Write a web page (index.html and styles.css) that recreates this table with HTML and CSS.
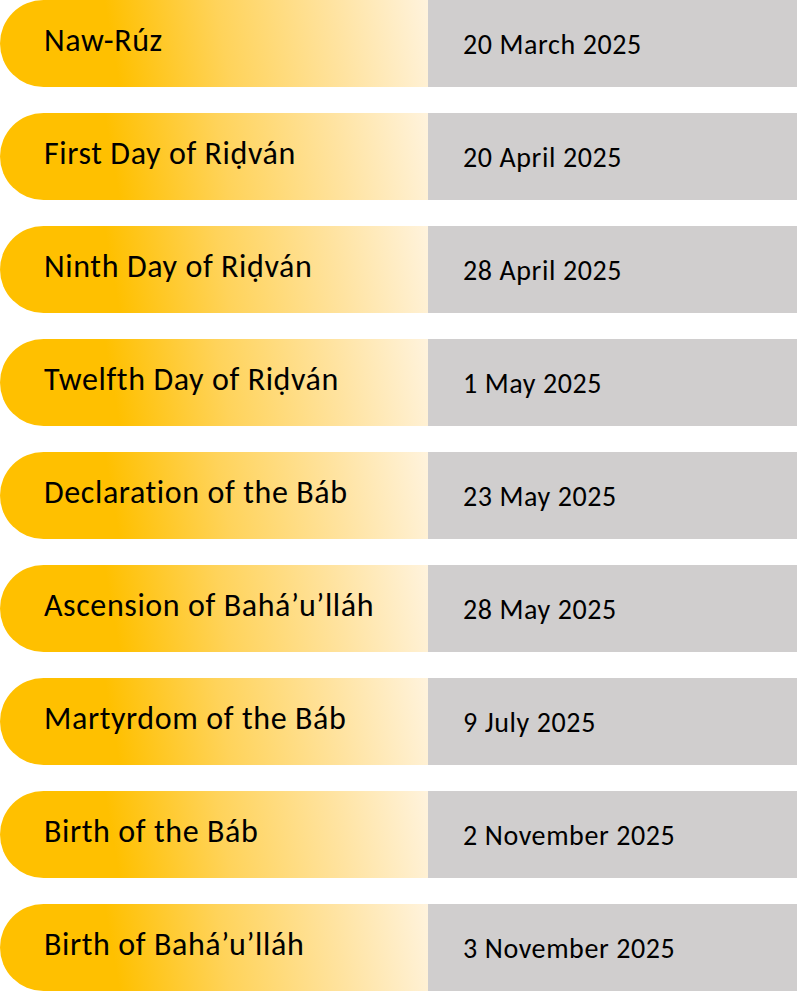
FILE: index.html
```html
<!DOCTYPE html>
<html lang="en">
<head>
<meta charset="utf-8">
<title>Holy Days 2025</title>
<link rel="stylesheet" href="styles.css">
</head>
<body>
<div class="list">
  <div class="row"><div class="name">Naw-Rúz</div><div class="date">20 March 2025</div></div>
  <div class="row"><div class="name">First Day of Riḍván</div><div class="date">20 April 2025</div></div>
  <div class="row"><div class="name">Ninth Day of Riḍván</div><div class="date">28 April 2025</div></div>
  <div class="row"><div class="name">Twelfth Day of Riḍván</div><div class="date">1 May 2025</div></div>
  <div class="row"><div class="name">Declaration of the Báb</div><div class="date">23 May 2025</div></div>
  <div class="row"><div class="name">Ascension of Bahá’u’lláh</div><div class="date">28 May 2025</div></div>
  <div class="row"><div class="name">Martyrdom of the Báb</div><div class="date">9 July 2025</div></div>
  <div class="row"><div class="name">Birth of the Báb</div><div class="date">2 November 2025</div></div>
  <div class="row"><div class="name">Birth of Bahá’u’lláh</div><div class="date">3 November 2025</div></div>
</div>
</body>
</html>
```
FILE: styles.css
```css
html, body {
  margin: 0;
  padding: 0;
  background: #ffffff;
}
body {
  font-family: Carlito, Lato, "Open Sans", sans-serif;
  color: #000;
}
.list {
  display: flex;
  flex-direction: column;
  gap: 26px;
  width: 797px;
}
.row {
  display: grid;
  grid-template-columns: 428px 1fr;
  height: 87px;
}
.name {
  border-radius: 44px 0 0 44px;
  background: linear-gradient(80deg, #FFC000 0%, #FFC000 27%, #FFD35A 52%, #FFE3A0 78%, #FFF3DD 100%);
  padding: 22px 0 0 44px;
  font-size: 32px;
  letter-spacing: 0.6px;
  line-height: 1.2;
  white-space: nowrap;
}
.date {
  background: #D0CECE;
  padding: 28px 0 0 35px;
  font-size: 28px;
  letter-spacing: 0.6px;
  line-height: 1.2;
  white-space: nowrap;
}
```
